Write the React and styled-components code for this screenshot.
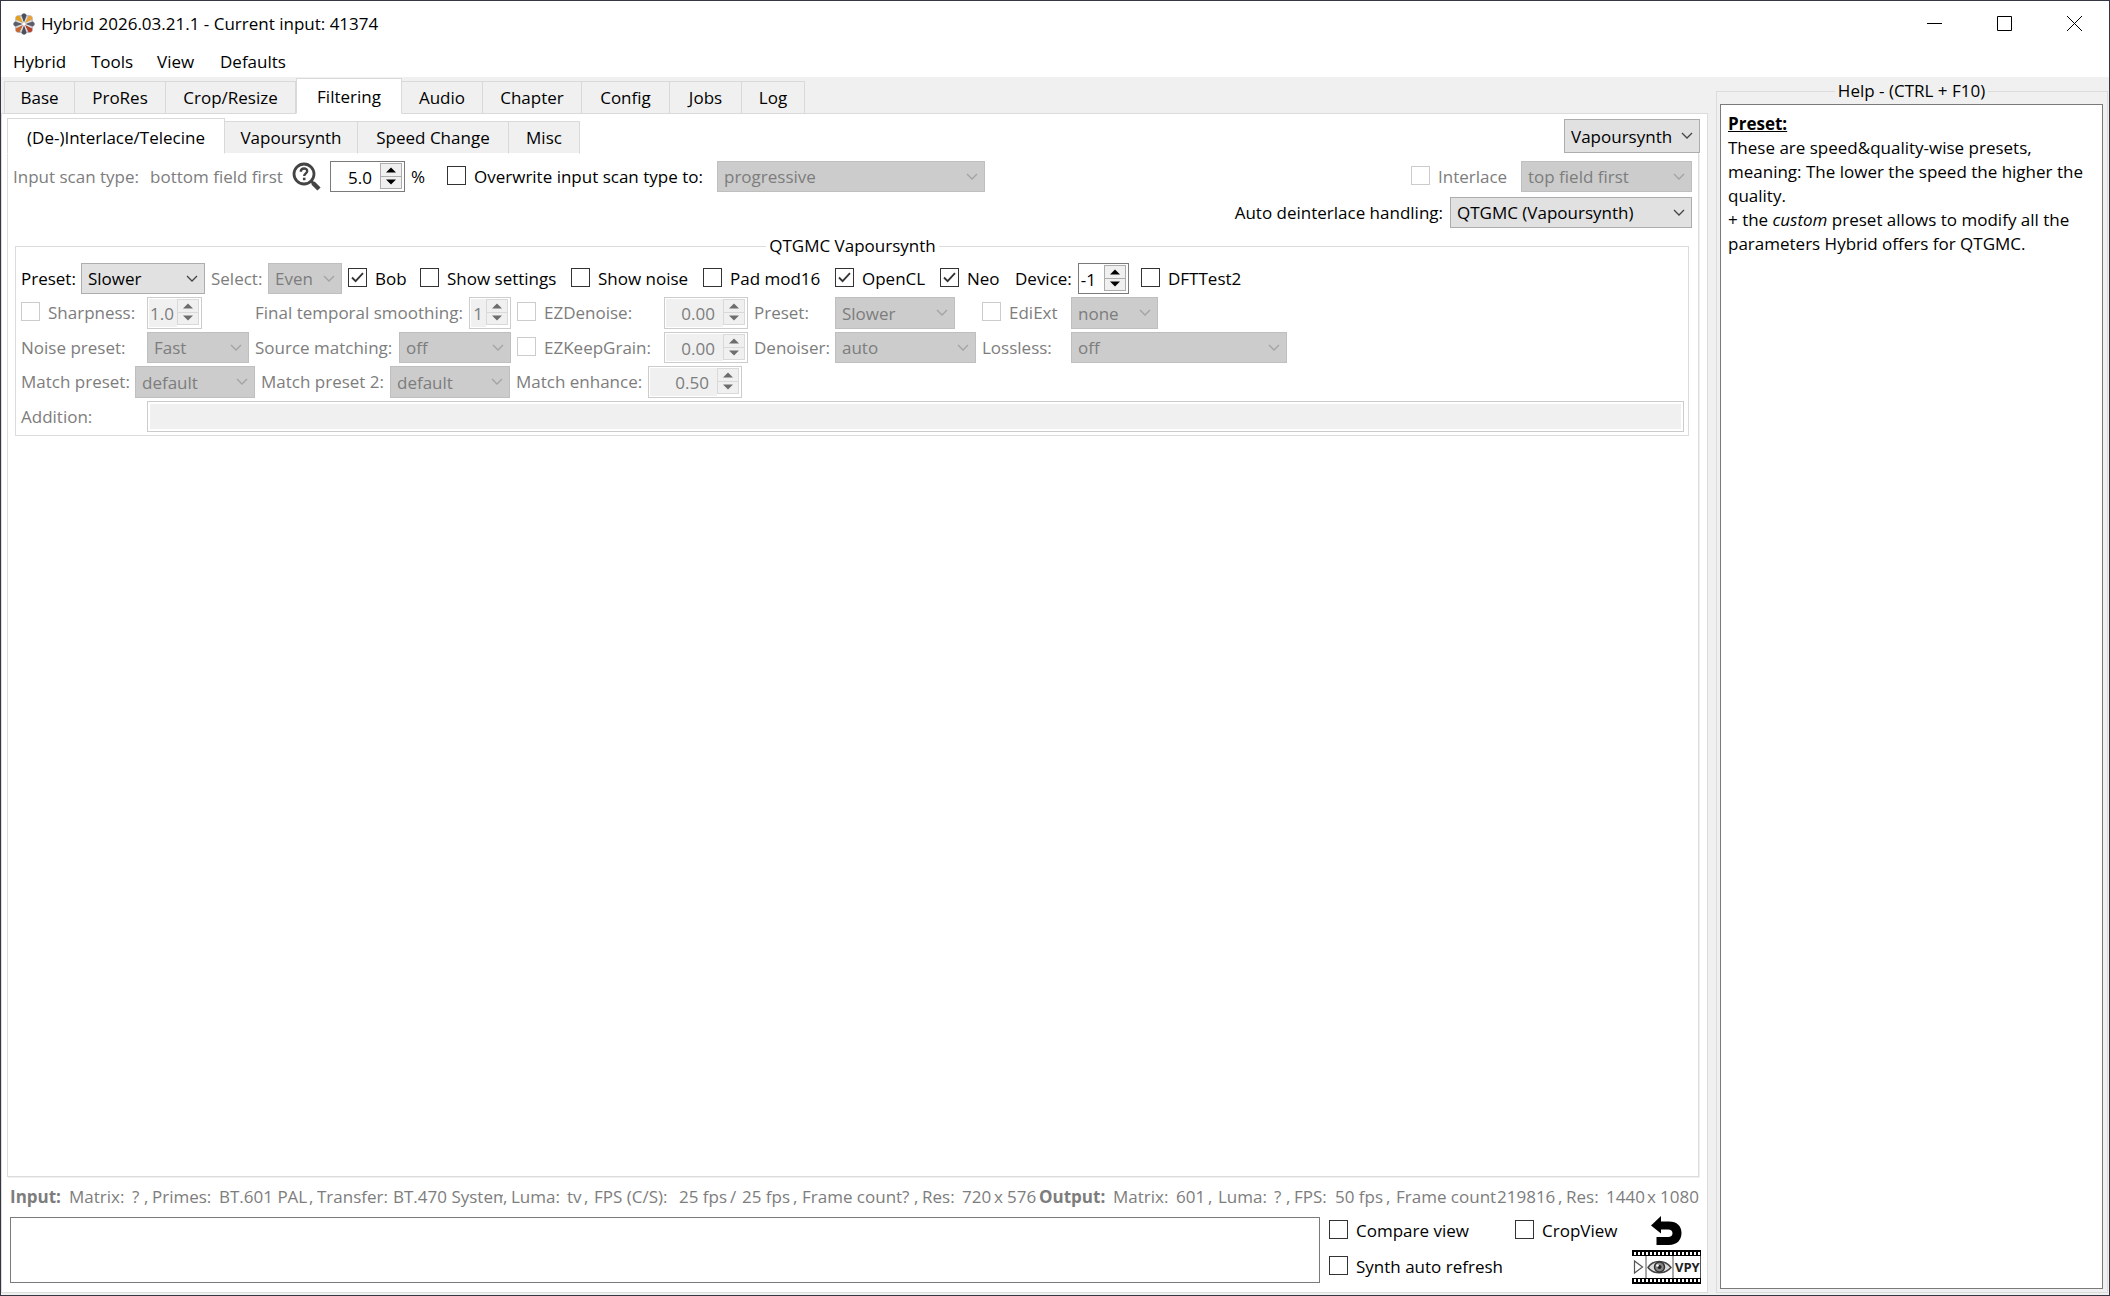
import React, { useState } from 'react';
import styled, { createGlobalStyle } from 'styled-components';

const GlobalStyle = createGlobalStyle`
  *, *::before, *::after {
    box-sizing: border-box;
  }

  body {
    margin: 0;
    font-family: 'Open Sans', 'Noto Sans', sans-serif;
    font-size: 17px;
    line-height: 24px;
    color: #000;
    background: #fff;
  }

  button, input, select, textarea {
    font: inherit;
    color: inherit;
    margin: 0;
    border-radius: 0;
  }
`;

/* ---------- window frame ---------- */

const Window = styled.div`
  display: flex;
  flex-direction: column;
  height: 100vh;
  border: 1px solid #343742;
  background: #fff;
  white-space: nowrap;
  overflow: hidden;
`;

const TitleBar = styled.header`
  display: flex;
  align-items: center;
  gap: 6px;
  height: 45px;
  padding-left: 12px;
`;

const Title = styled.h1`
  flex: 1;
  margin: 0;
  font-size: 17px;
  font-weight: 400;
`;

const WindowButtons = styled.div`
  display: flex;
`;

const WindowButton = styled.button`
  display: flex;
  align-items: center;
  justify-content: center;
  width: 70px;
  height: 42px;
  padding: 0;
  border: none;
  background: none;
`;

const MenuBar = styled.nav`
  display: flex;
  align-items: center;
  height: 31px;
  padding-left: 3px;
`;

const MenuItem = styled.button`
  width: ${(p) => p.$width}px;
  padding: 0 0 0 9px;
  border: none;
  background: none;
  text-align: left;
`;

const Body = styled.div`
  flex: 1;
  display: flex;
  min-height: 0;
  background: #f0f0f0;
`;

const Main = styled.main`
  flex: 1;
  display: flex;
  flex-direction: column;
  min-width: 0;
  padding: 1px 0 2px;
`;

/* ---------- tabs ---------- */

const TabBar = styled.div`
  display: flex;
  align-items: flex-end;
  height: ${(p) => p.$height}px;
  padding-left: ${(p) => p.$indent}px;
`;

const Tab = styled.button`
  width: ${(p) => p.$width}px;
  height: ${(p) => (p.$active ? 36 : 33)}px;
  padding: ${(p) => (p.$active && p.$flat ? 3 : 1)}px 0 0;
  border: 1px solid #d9d9d9;
  border-bottom-color: ${(p) => (p.$active || p.$flat ? 'transparent' : '#d9d9d9')};
  border-left-width: ${(p) => (p.$first || p.$active ? 1 : 0)}px;
  background: ${(p) => (p.$active ? '#fff' : '#f0f0f0')};
  background-clip: ${(p) => (p.$flat && !p.$active ? 'padding-box' : 'border-box')};
  margin-bottom: -1px;
  z-index: 1;
`;

const Pane = styled.section`
  flex: 1;
  display: flex;
  flex-direction: column;
  min-height: 0;
  padding: 5px 6px 9px 5px;
  border: 1px solid #dcdcdc;
  background: #fff;
`;

const InnerHead = styled.div`
  display: flex;
  justify-content: space-between;
  align-items: flex-end;
  height: 34px;
  margin-right: 1px;
`;

const InnerPane = styled.section`
  flex: 1;
  margin-right: 2px;
  padding: 8px 6px 0 5px;
  border: 1px solid #dcdcdc;
  border-top: none;
  box-shadow: 1px 1px 0 #f0f0f0;
`;

/* ---------- controls ---------- */

const ComboBox = styled.div`
  display: grid;
  align-items: center;
  width: ${(p) => p.$width}px;
  height: 100%;
  min-height: 31px;
`;

const Select = styled.select`
  grid-area: 1 / 1;
  appearance: none;
  width: 100%;
  height: 100%;
  padding: 1px 24px 0 6px;
  border: 1px solid #adadad;
  background: #e1e1e1;
  overflow: hidden;

  &:disabled {
    border-color: #bfbfbf;
    background: #ccc;
    color: #7d7d7d;
    opacity: 1;
  }
`;

const Arrow = styled.svg`
  grid-area: 1 / 1;
  justify-self: end;
  margin-right: 7px;
  pointer-events: none;
`;

const CheckLabel = styled.label`
  display: flex;
  align-items: center;
  gap: 8px;
  width: ${(p) => (p.$width ? `${p.$width}px` : 'auto')};
  color: ${(p) => (p.$disabled ? '#7d7d7d' : '#000')};
`;

const CheckFrame = styled.span`
  display: grid;
  place-items: center;
  width: 19px;
  height: 19px;
  margin-bottom: 3px;
`;

const CheckInput = styled.input`
  grid-area: 1 / 1;
  appearance: none;
  width: 19px;
  height: 19px;
  border: 1px solid #333;
  background: #fff;

  &:disabled {
    border-color: #ccc;
  }
`;

const CheckMark = styled.svg`
  grid-area: 1 / 1;
  pointer-events: none;
`;

const SpinFrame = styled.div`
  display: flex;
  width: ${(p) => p.$width}px;
  height: 100%;
  min-height: 31px;
  padding: 1px;
  border: 1px solid ${(p) => (p.$disabled ? '#ccc' : '#7a7a7a')};
  background: #fff;
`;

const SpinInput = styled.input`
  flex: 1;
  min-width: 0;
  padding: 2px ${(p) => p.$pad}px 0 0;
  border: none;
  background: #fff;
  text-align: right;
  appearance: textfield;

  &::-webkit-inner-spin-button {
    display: none;
  }

  &:disabled {
    background: #f0f0f0;
    color: #7d7d7d;
  }
`;

const SpinButtons = styled.div`
  display: flex;
  flex-direction: column;
  width: 22px;
  height: 26px;
  margin-right: 1px;
`;

const SpinButton = styled.button`
  flex: 1;
  display: flex;
  align-items: center;
  justify-content: center;
  padding: 0;
  border: 1px solid #adadad;
  background: #f0f0f0;
  color: #000;

  & + & {
    border-top: none;
  }

  &:disabled {
    border-color: #d9d9d9;
    color: #6d6d6d;
  }
`;

/* ---------- filter page ---------- */

const Row = styled.div`
  display: flex;
  align-items: center;
  height: 31px;
`;

const HandlingRow = styled(Row)`
  justify-content: flex-end;
  gap: 7px;
  margin-top: 5px;
`;

const Spacer = styled.div`
  flex: 1;
`;

const Label = styled.label`
  flex: none;
  width: ${(p) => (p.$width ? `${p.$width}px` : 'auto')};
  color: ${(p) => (p.$disabled ? '#7d7d7d' : '#000')};
`;

const IconButton = styled.button`
  display: flex;
  padding: 0;
  border: none;
  background: none;
`;

const DetectButton = styled(IconButton)`
  margin-right: 9px;
`;

const Group = styled.fieldset`
  margin: 6px 3px 0 2px;
  padding: 5px 4px 3px 5px;
  border: 1px solid #dcdcdc;
  min-width: 0;
`;

const Legend = styled.legend`
  margin: 0 auto;
  padding: 0 3px;
`;

const Rows = styled.div`
  display: grid;
  grid-template-rows: 31px 32px 31px 32px 31px;
  gap: 3px;
`;

const GroupRow = styled.div`
  display: flex;
  align-items: center;
`;

const Gap = styled.div`
  flex: none;
  width: ${(p) => p.$width}px;
`;

const AdditionInput = styled.input`
  flex: 1;
  height: 100%;
  padding: 2px;
  border: 1px solid #ccc;
  background: #f0f0f0;
  box-shadow: inset 0 0 0 2px #fff;
`;

/* ---------- status and footer ---------- */

const StatusBar = styled.div`
  display: flex;
  align-items: center;
  padding-left: 3px;
  margin-top: 8px;
  color: #7d7d7d;
`;

const StatusItem = styled.span`
  flex: none;
  width: ${(p) => p.$width}px;
  overflow: hidden;
  font-weight: ${(p) => (p.$bold ? 700 : 400)};
`;

const Footer = styled.div`
  display: flex;
  align-items: stretch;
  gap: 9px;
  height: 66px;
  margin-top: 8px;
  padding-left: 3px;
`;

const Log = styled.textarea`
  flex: 1;
  resize: none;
  border: 1px solid #7a7a7a;
  background: #fff;
`;

const ViewOptions = styled.div`
  display: grid;
  grid-template-columns: 186px 117px 69px;
  grid-template-rows: 28px 1fr;
  row-gap: 5px;
  align-items: center;
  justify-items: start;
`;

const CenterButton = styled(IconButton)`
  justify-self: center;
`;

/* ---------- help dock ---------- */

const HelpDock = styled.fieldset`
  display: flex;
  width: 392px;
  margin: 2px 1px 2px 8px;
  padding: 1px 4px 3px 3px;
  border: 1px solid #dcdcdc;
`;

const HelpText = styled.article`
  width: 100%;
  height: 100%;
  padding: 7px 7px;
  border: 1px solid #7a7a7a;
  background: #fff;
  white-space: normal;
`;

const HelpTitle = styled.strong`
  display: block;
  text-decoration: underline;
`;

const Combo = ({ id, value, width, disabled, label }) => (
  <ComboBox $width={width}>
    <Select id={id} defaultValue={value} disabled={disabled} aria-label={label}>
      <option>{value}</option>
    </Select>
    <Arrow width="12" height="8" viewBox="0 0 12 8" fill="none" stroke={disabled ? '#a3a3a3' : '#444'}>
      <path d="M1 1l5 5 5-5" strokeWidth="1.3" />
    </Arrow>
  </ComboBox>
);

const Check = ({ label, checked = false, disabled, width }) => {
  const [on, setOn] = useState(checked);
  return (
    <CheckLabel $disabled={disabled} $width={width}>
      <CheckFrame>
        <CheckInput type="checkbox" checked={on} disabled={disabled} onChange={() => setOn(!on)} />
        {on && (
          <CheckMark width="13" height="11" viewBox="0 0 13 11" fill="none" stroke="#333" strokeWidth="1.8">
            <path d="M1 5.5l3.6 3.7L12 1.2" />
          </CheckMark>
        )}
      </CheckFrame>
      {label}
    </CheckLabel>
  );
};

const Spin = ({ id, value, width, pad = 8, disabled, label }) => (
  <SpinFrame $width={width} $disabled={disabled}>
    <SpinInput id={id} type="number" step="any" defaultValue={value} $pad={pad} disabled={disabled} aria-label={label} />
    <SpinButtons>
      <SpinButton aria-label="Increase" disabled={disabled}>
        <svg width="10" height="6" viewBox="0 0 10 6"><path d="M0 5.5L5 .5l5 5z" fill="currentColor" /></svg>
      </SpinButton>
      <SpinButton aria-label="Decrease" disabled={disabled}>
        <svg width="10" height="6" viewBox="0 0 10 6"><path d="M0 .5l5 5 5-5z" fill="currentColor" /></svg>
      </SpinButton>
    </SpinButtons>
  </SpinFrame>
);

const petals = [
  [45, '#e9a23b'],
  [135, '#b5412b'],
  [225, '#c9672f'],
  [315, '#e5a01e'],
  [0, '#4c4f5c'],
  [90, '#5c5f6a'],
  [180, '#4c4f5c'],
  [270, '#5c5f6a'],
];

const Logo = () => (
  <svg width="22" height="22" viewBox="-11 -11 22 22">
    <rect x="-9" y="-9" width="18" height="18" rx="4" fill="#c3c5cc" />
    {petals.map(([angle, fill]) => (
      <path key={angle} d="M0-1L-2.600-9Q0-12.500 2.600-9z" fill={fill} transform={`rotate(${angle})`} />
    ))}
    <path d="M-7-3L7 3M-3 7L3-7M-7 3L7-3M-3-7L3 7" stroke="#e4e4e8" strokeWidth=".9" />
    <circle r="1.300" fill="#fff" />
  </svg>
);

const Magnifier = () => (
  <svg width="29" height="29" viewBox="0 0 29 29" fill="none" stroke="#444">
    <circle cx="12" cy="12" r="10" strokeWidth="2.800" />
    <path d="M19 19l2.500 2.500" strokeWidth="3" />
    <path d="M21 21l6 6" strokeWidth="4.500" />
    <path d="M8.800 9.800c0-4.500 6.600-4.200 6.400-.5-.1 2-3 2.200-3 4.700" strokeWidth="2.400" />
    <path d="M12.200 15.700v2.500" strokeWidth="2.600" />
  </svg>
);

const UndoIcon = () => (
  <svg width="31" height="30" viewBox="0 0 31 30">
    <path d="M0 9.500L10 0v5.500h8C26 5.500 30.500 10 30.500 17S26 29 18 29H5.500v-8H17c3 0 4.500-1.500 4.500-3.800S20 13.500 17 13.500h-7V17.500z" />
  </svg>
);

const FilmIcon = () => (
  <svg width="69" height="34" viewBox="0 0 69 34">
    <path d="M0 0h69v6H0zM0 28h69v6H0z" />
    <path d="M2 3.500h67M2 30.500h67" stroke="#fff" strokeWidth="3" strokeDasharray="2 2" />
    <path d="M14 6v22M41 6v22M68.500 6v22" stroke="#555" fill="none" />
    <path d="M2.500 11v12l8-6z" fill="#fff" stroke="#555" strokeWidth="1.200" />
    <path d="M16 17.500c5-8 17-8 23 0-6 7-18 7-23 0z" fill="#ddd" stroke="#444" strokeWidth="1.500" />
    <circle cx="27.500" cy="17" r="5" fill="#888" stroke="#333" strokeWidth="1.500" />
    <circle cx="27.500" cy="17" r="2" fill="#222" />
    <circle cx="25.500" cy="15.500" r="1.300" fill="#fff" />
    <text x="43" y="22" fontSize="13" fontWeight="700" fill="#222">VPY</text>
  </svg>
);

const mainTabs = [
  ['Base', 71],
  ['ProRes', 91],
  ['Crop/Resize', 130],
  ['Filtering', 106],
  ['Audio', 81],
  ['Chapter', 99],
  ['Config', 88],
  ['Jobs', 72],
  ['Log', 63],
];

const filterTabs = [
  ['(De-)Interlace/Telecine', 218],
  ['Vapoursynth', 133],
  ['Speed Change', 151],
  ['Misc', 71],
];

const status = [
  ['Input:', 59, true],
  ['Matrix:', 63],
  ['?', 12],
  [',', 8],
  ['Primes:', 67],
  ['BT.601 PAL', 90],
  [',', 8],
  ['Transfer:', 76],
  ['BT.470 System', 110],
  [',', 8],
  ['Luma:', 56],
  ['tv', 17],
  [',', 10],
  ['FPS (C/S):', 85],
  ['25 fps', 51],
  ['/', 12],
  ['25 fps', 51],
  [',', 9],
  ['Frame count', 100],
  ['?', 12],
  [',', 8],
  ['Res:', 40],
  ['720', 32],
  ['x', 13],
  ['576', 32],
  ['Output:', 74, true],
  ['Matrix:', 63],
  ['601', 32],
  [',', 10],
  ['Luma:', 56],
  ['?', 12],
  [',', 8],
  ['FPS:', 41],
  ['50 fps', 51],
  [',', 10],
  ['Frame count', 101],
  ['219816', 61],
  [',', 8],
  ['Res:', 40],
  ['1440', 41],
  ['x', 13],
  ['1080', 40],
];

const DeinterlacePage = () => (
  <InnerPane>
    <Row>
      <Label as="span" $disabled $width={137}>Input scan type:</Label>
      <Label as="span" $disabled $width={142}>bottom field first</Label>
      <DetectButton aria-label="Detect scan type"><Magnifier /></DetectButton>
      <Spin width={75} value="5.0" label="Threshold" />
      <Gap $width={6} />
      <Label as="span" $width={36}>%</Label>
      <Check label="Overwrite input scan type to:" width={270} />
      <Combo width={268} value="progressive" disabled label="Scan type" />
      <Spacer />
      <Check label="Interlace" disabled width={110} />
      <Combo width={171} value="top field first" disabled label="Field order" />
    </Row>
    <HandlingRow>
      <Label htmlFor="handling">Auto deinterlace handling:</Label>
      <Combo id="handling" width={242} value="QTGMC (Vapoursynth)" />
    </HandlingRow>
    <Group>
      <Legend>QTGMC Vapoursynth</Legend>
      <Rows>
        <GroupRow>
          <Label htmlFor="preset" $width={60}>Preset:</Label>
          <Combo id="preset" width={124} value="Slower" />
          <Gap $width={6} />
          <Label htmlFor="select" $disabled $width={57}>Select:</Label>
          <Combo id="select" width={74} value="Even" disabled />
          <Gap $width={6} />
          <Check label="Bob" checked width={72} />
          <Check label="Show settings" width={151} />
          <Check label="Show noise" width={132} />
          <Check label="Pad mod16" width={132} />
          <Check label="OpenCL" checked width={105} />
          <Check label="Neo" checked width={75} />
          <Label htmlFor="device" $width={63}>Device:</Label>
          <Spin id="device" width={51} value="-1" />
          <Gap $width={12} />
          <Check label="DFTTest2" />
        </GroupRow>
        <GroupRow>
          <Check label="Sharpness:" disabled width={126} />
          <Spin width={55} value="1.0" pad={3} disabled label="Sharpness" />
          <Gap $width={53} />
          <Label htmlFor="smoothing" $disabled $width={214}>Final temporal smoothing:</Label>
          <Spin id="smoothing" width={42} value="1" pad={3} disabled />
          <Gap $width={6} />
          <Check label="EZDenoise:" disabled width={147} />
          <Spin width={84} value="0.00" disabled label="EZDenoise" />
          <Gap $width={6} />
          <Label htmlFor="ez-preset" $disabled $width={81}>Preset:</Label>
          <Combo id="ez-preset" width={120} value="Slower" disabled />
          <Gap $width={27} />
          <Check label="EdiExt" disabled width={89} />
          <Combo width={87} value="none" disabled label="EdiExt" />
        </GroupRow>
        <GroupRow>
          <Label htmlFor="noise" $disabled $width={126}>Noise preset:</Label>
          <Combo id="noise" width={102} value="Fast" disabled />
          <Gap $width={6} />
          <Label htmlFor="matching" $disabled $width={144}>Source matching:</Label>
          <Combo id="matching" width={112} value="off" disabled />
          <Gap $width={6} />
          <Check label="EZKeepGrain:" disabled width={147} />
          <Spin width={84} value="0.00" disabled label="EZKeepGrain" />
          <Gap $width={6} />
          <Label htmlFor="denoiser" $disabled $width={81}>Denoiser:</Label>
          <Combo id="denoiser" width={141} value="auto" disabled />
          <Gap $width={6} />
          <Label htmlFor="lossless" $disabled $width={89}>Lossless:</Label>
          <Combo id="lossless" width={216} value="off" disabled />
        </GroupRow>
        <GroupRow>
          <Label htmlFor="match" $disabled $width={114}>Match preset:</Label>
          <Combo id="match" width={120} value="default" disabled />
          <Gap $width={6} />
          <Label htmlFor="match2" $disabled $width={129}>Match preset 2:</Label>
          <Combo id="match2" width={120} value="default" disabled />
          <Gap $width={6} />
          <Label htmlFor="enhance" $disabled $width={132}>Match enhance:</Label>
          <Spin id="enhance" width={94} value="0.50" disabled />
        </GroupRow>
        <GroupRow>
          <Label htmlFor="addition" $disabled $width={126}>Addition:</Label>
          <AdditionInput id="addition" type="text" disabled />
        </GroupRow>
      </Rows>
    </Group>
  </InnerPane>
);

const App = () => (
  <>
    <GlobalStyle />
    <Window>
      <TitleBar>
        <Logo />
        <Title>Hybrid 2026.03.21.1 - Current input: 41374</Title>
        <WindowButtons>
          <WindowButton aria-label="Minimize">
            <svg width="15" height="15"><path d="M0 7.500h15" stroke="#000" /></svg>
          </WindowButton>
          <WindowButton aria-label="Maximize">
            <svg width="15" height="15"><path d="M.5.500h14v14H.5z" stroke="#000" fill="none" /></svg>
          </WindowButton>
          <WindowButton aria-label="Close">
            <svg width="15" height="15"><path d="M0 0l15 15M15 0L0 15" stroke="#000" /></svg>
          </WindowButton>
        </WindowButtons>
      </TitleBar>
      <MenuBar>
        <MenuItem $width={78}>Hybrid</MenuItem>
        <MenuItem $width={66}>Tools</MenuItem>
        <MenuItem $width={63}>View</MenuItem>
        <MenuItem $width={90}>Defaults</MenuItem>
      </MenuBar>
      <Body>
        <Main>
          <TabBar role="tablist" $height={35} $indent={3}>
            {mainTabs.map(([name, width], i) => (
              <Tab key={name} role="tab" $width={width} $first={i === 0} $active={name === 'Filtering'}>
                {name}
              </Tab>
            ))}
          </TabBar>
          <Pane>
            <InnerHead>
              <TabBar role="tablist" $height={34} $indent={0}>
                {filterTabs.map(([name, width], i) => (
                  <Tab key={name} role="tab" $width={width} $first={i === 0} $active={i === 0} $flat>
                    {name}
                  </Tab>
                ))}
              </TabBar>
              <Combo width={136} value="Vapoursynth" label="Filter backend" />
            </InnerHead>
            <DeinterlacePage />
            <StatusBar>
              {status.map(([text, width, bold], i) => (
                <StatusItem key={i} $width={width} $bold={bold}>{text}</StatusItem>
              ))}
            </StatusBar>
            <Footer>
              <Log aria-label="Messages" />
              <ViewOptions>
                <Check label="Compare view" />
                <Check label="CropView" />
                <CenterButton aria-label="Undo"><UndoIcon /></CenterButton>
                <Check label="Synth auto refresh" />
                <span />
                <IconButton aria-label="Preview Vapoursynth script"><FilmIcon /></IconButton>
              </ViewOptions>
            </Footer>
          </Pane>
        </Main>
        <HelpDock>
          <Legend>Help - (CTRL + F10)</Legend>
          <HelpText>
            <HelpTitle>Preset:</HelpTitle>
            These are speed&amp;quality-wise presets, meaning: The lower the speed the higher the quality.
            <br />+ the <em>custom</em> preset allows to modify all the parameters Hybrid offers for QTGMC.
          </HelpText>
        </HelpDock>
      </Body>
    </Window>
  </>
);

export default App;
